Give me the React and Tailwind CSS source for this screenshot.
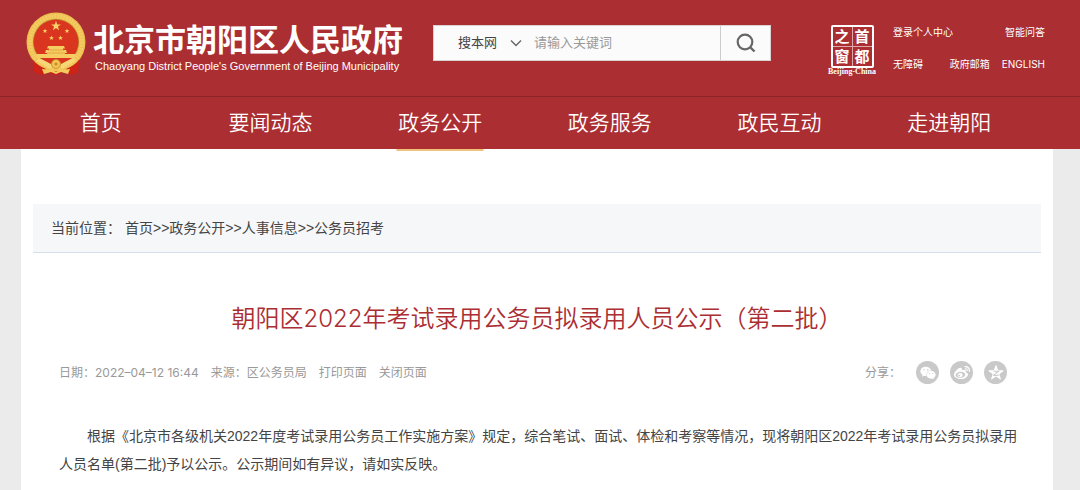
import React, { useState } from 'react';
import { FaWeixin, FaWeibo } from 'react-icons/fa';

const NAV_ITEMS = ['首页', '要闻动态', '政务公开', '政务服务', '政民互动', '走进朝阳'];
const CRUMBS = ['首页', '政务公开', '人事信息', '公务员招考'];

const STAR = '0,-10 2.3,-3.1 9.5,-3.1 3.7,1.2 5.9,8.1 0,3.9 -5.9,8.1 -3.7,1.2 -9.5,-3.1 -2.3,-3.1';

const Emblem = () => (
  <svg viewBox="0 0 60 64" className="h-16 w-[60px] shrink-0" aria-hidden="true">
    {/* ribbon */}
    <path d="M7 46 L8 60 L14 63 L22 60 L30 63 L38 60 L46 63 L52 60 L53 46 Z" fill="#cf2318" />
    <path d="M9 52 L15 56 M8 57 L15 60 M51 52 L45 56 M52 57 L45 60" stroke="#a01510" strokeWidth="1" />
    {/* wheat ring */}
    <circle cx="30" cy="30" r="29.5" fill="#efc04f" />
    <circle cx="30" cy="30" r="26" fill="none" stroke="#f3cc66" strokeWidth="4" strokeDasharray="2 1" />
    <circle cx="30" cy="30" r="23" fill="#b97a2c" />
    <circle cx="30" cy="30" r="22.3" fill="#d9351f" />
    {/* gate */}
    <path d="M22 34 h16 l1 2.5 h-2 v1.5 h3 l1 3 h-2 v1 h11 l-1 4 H11 l-1 -4 H21 v-1 h-2 l1 -3 h3 v-1.5 h-2 Z" fill="#f6cd62" />
    <path d="M22 38 h16 M21 41 h18" stroke="#d88b2b" strokeWidth="0.6" />
    {/* ribbon ends below the ring */}
    <path d="M7 48 Q12 54 20 57 L17 62 Q9 62 8 58 Z M53 48 Q48 54 40 57 L43 62 Q51 62 52 58 Z" fill="#cf2318" />
    {/* gear and knots */}
    <path d="M13 46 Q22 50 26 53 L24 57 Q18 53 10 49 Z M47 46 Q38 50 34 53 L36 57 Q42 53 50 49 Z" fill="#f7d676" />
    <circle cx="30" cy="52" r="4.5" fill="#f3c452" stroke="#c98a2c" strokeWidth="0.8" />
    <circle cx="30" cy="52" r="1.6" fill="#c98a2c" />
    <path d="M16 57 L26 58 L30 60 L34 58 L44 57 L42 62 L35 60 L30 62 L25 60 L18 62 Z" fill="#f4cc5e" />
    <polygon points={STAR} transform="translate(30 14) scale(0.52)" fill="#f8d568" />
    <polygon points={STAR} transform="translate(19 19) scale(0.26)" fill="#f8d568" />
    <polygon points={STAR} transform="translate(41 19) scale(0.26)" fill="#f8d568" />
    <polygon points={STAR} transform="translate(25.5 26) scale(0.26)" fill="#f8d568" />
    <polygon points={STAR} transform="translate(34.5 26) scale(0.26)" fill="#f8d568" />
  </svg>
);

const QzoneIcon = () => (
  <svg viewBox="-11 -11 22 22" className="h-4 w-4" aria-hidden="true">
    <polygon points={STAR} fill="#fff" stroke="#fff" strokeWidth="1.6" strokeLinejoin="round" />
    <path d="M-3.6 -2.4 H3.4 L-3 3 Q0 3.8 4 2.8" fill="none" stroke="#c9c9c9" strokeWidth="1.5" />
  </svg>
);

const SearchBar = () => {
  const [keyword, setKeyword] = useState('');
  return (
    <form
      className="flex h-9 w-[338px] shrink-0 border border-[#d9d2d2] bg-[#fbfbfb]"
      onSubmit={(e) => e.preventDefault()}
    >
      <div className="relative flex w-[100px] items-center">
        <select
          aria-label="搜索范围"
          className="h-full w-full appearance-none bg-transparent pl-6 text-[13px] text-[#444] outline-none"
        >
          <option>搜本网</option>
        </select>
        <svg viewBox="0 0 12 8" className="pointer-events-none absolute right-3 h-2 w-3" aria-hidden="true">
          <path d="M1 1.5 L6 6.5 L11 1.5" fill="none" stroke="#666" strokeWidth="1.4" />
        </svg>
      </div>
      <input
        type="text"
        aria-label="关键词"
        value={keyword}
        onChange={(e) => setKeyword(e.target.value)}
        placeholder="请输入关键词"
        className="min-w-0 flex-1 bg-transparent text-[13px] text-[#444] outline-none placeholder:text-[#999]"
      />
      <button type="submit" aria-label="搜索" className="flex w-[50px] items-center justify-center border-l border-[#ccc]">
        <svg viewBox="0 0 20 20" className="h-5 w-5" aria-hidden="true">
          <circle cx="9" cy="9" r="7.3" fill="none" stroke="#666" strokeWidth="2.2" />
          <path d="M14 14 L18.5 18.5" stroke="#666" strokeWidth="2.4" />
        </svg>
      </button>
    </form>
  );
};

const CapitalWindow = () => (
  <a href="#" className="flex w-12 flex-col items-center text-white">
    <span className="grid h-[43px] w-[43px] grid-cols-2 grid-rows-2 gap-px rounded-xs border-2 border-white bg-[#dfa9ab] text-[15px] leading-[19px] font-bold">
      {['之', '首', '窗', '都'].map((c) => (
        <span key={c} className="overflow-hidden bg-[#ab2e32] text-center">{c}</span>
      ))}
    </span>
    <span className="font-['Liberation_Serif',serif] text-[8px] leading-2 font-bold whitespace-nowrap">Beijing-China</span>
  </a>
);

const shareButton = 'flex h-[23px] w-[23px] items-center justify-center rounded-full bg-[#c9c9c9] text-white';

const App = () => (
  <div lang="zh-CN" className="min-h-screen bg-[#ebebeb] font-['Inter','Noto_Sans_CJK_SC',sans-serif]">
    <header className="bg-[#ab2e32] text-white">
      <div className="flex h-24 items-start pr-[35px] pl-[26px]">
        <a href="#" className="flex pt-3">
          <Emblem />
          <span className="flex flex-col pt-3 pl-[7px] whitespace-nowrap">
            <span className="text-[31px] leading-8 font-bold">北京市朝阳区人民政府</span>
            <span className="pl-0.5 font-['Liberation_Sans',sans-serif] text-[11px] leading-5">
              Chaoyang District People's Government of Beijing Municipality
            </span>
          </span>
        </a>
        <div className="ml-auto flex items-start">
          <div className="mt-[25px] mr-[57px]">
            <SearchBar />
          </div>
          <div className="mt-[25px] mr-[17px]">
            <CapitalWindow />
          </div>
          <div className="mt-6 flex w-[152px] flex-col gap-4 text-[10px] leading-4 whitespace-nowrap">
            <div className="flex justify-between">
              <a href="#">登录个人中心</a>
              <a href="#">智能问答</a>
            </div>
            <div className="flex justify-between">
              <a href="#">无障碍</a>
              <span className="flex gap-3">
                <a href="#">政府邮箱</a>
                <a href="#">ENGLISH</a>
              </span>
            </div>
          </div>
        </div>
      </div>
      <nav className="flex border-t border-[#8c2428] pr-[46px] pl-4">
        {NAV_ITEMS.map((item) => (
          <a key={item} href="#" className="relative flex h-[52px] flex-1 items-center justify-center text-[21px] font-[350]">
            {item}
            {item === '政务公开' && (
              <span className="absolute top-full left-1/2 h-0.5 w-[87px] -translate-x-1/2 bg-[#efc27c]" />
            )}
          </a>
        ))}
      </nav>
    </header>

    <div className="pr-[27px] pl-[21px]">
      <main className="min-h-[341px] bg-white px-3 pt-[55px]">
        <div className="flex h-[49px] items-center border-b border-[#d3e0ec] bg-[#f6f7f9] px-[18px] font-['Liberation_Sans','Noto_Sans_CJK_SC',sans-serif] text-sm text-[#444]">
          <span className="mr-1">当前位置：</span>
          {CRUMBS.map((crumb, i) => (
            <span key={crumb}>
              {i > 0 && '>>'}
              <a href="#">{crumb}</a>
            </span>
          ))}
        </div>

        <article className="px-5">
          <h1 className="mt-12 text-center text-2xl leading-9 font-[350] text-[#ab2e32]">
            朝阳区2022年考试录用公务员拟录用人员公示（第二批）
          </h1>
          <div className="mt-6 flex items-center justify-between px-1.5 text-xs text-[#999]">
            <div className="flex gap-3">
              <span>日期：2022–04–12 16:44</span>
              <span>来源：区公务员局</span>
              <button type="button">打印页面</button>
              <button type="button">关闭页面</button>
            </div>
            <div className="flex items-center gap-[11px] pr-2">
              <span className="mr-1">分享：</span>
              <a href="#" aria-label="微信" className={shareButton}>
                <FaWeixin className="h-4 w-4" />
              </a>
              <a href="#" aria-label="微博" className={shareButton}>
                <FaWeibo className="h-4 w-4" />
              </a>
              <a href="#" aria-label="QQ空间" className={shareButton}>
                <QzoneIcon />
              </a>
            </div>
          </div>
          <p className="mt-[38px] pl-1.5 indent-7 font-['Liberation_Sans','Noto_Sans_CJK_SC',sans-serif] text-sm leading-7 text-[#444]">
            根据《北京市各级机关2022年度考试录用公务员工作实施方案》规定，综合笔试、面试、体检和考察等情况，现将朝阳区2022年考试录用公务员拟录用人员名单(第二批)予以公示。公示期间如有异议，请如实反映。
          </p>
        </article>
      </main>
    </div>
  </div>
);

export default App;
